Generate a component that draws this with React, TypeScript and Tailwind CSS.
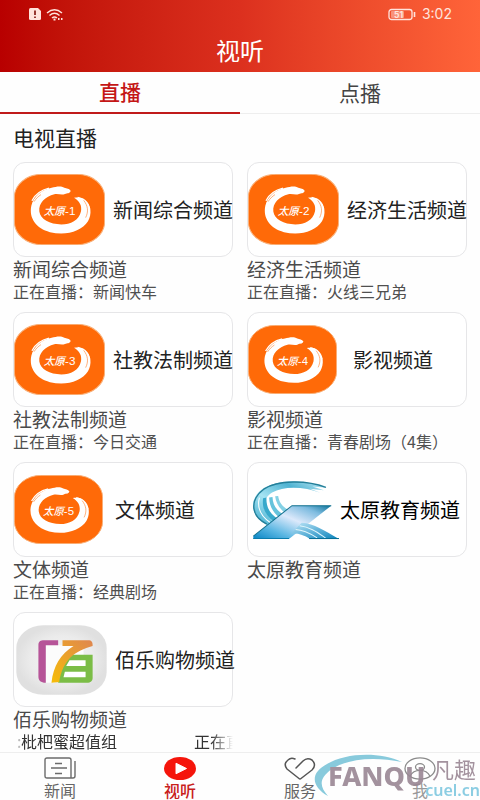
import type { ReactNode } from "react";

type Channel = {
  id: string;
  name: string;
  logo: ReactNode;
  titleClass: string;
  nowPlaying?: string;
  marquee?: [string, string];
};

function TaiyuanLogo({ no, small }: { no: number; small?: boolean }) {
  return (
    <svg viewBox="0 0 273 210" preserveAspectRatio="none" className={small ? "h-[69px] w-[89px] shrink-0" : "h-[71px] w-[91px] shrink-0"} aria-hidden="true">
      <rect x="1" y="1" width="271" height="208" rx="82" ry="68" fill="#ff6a08" stroke="#f9b27c" strokeWidth="3" />
      <path
        d="M170 50 C166 43 158 44 151 41 C140 34 126 38 113 41 C83 46 59 67 52 94 C44 131 67 161 108 172 C154 183 202 171 222 140 C234 119 232 91 214 77 C205 68 192 69 180 70 C197 80 204 93 201 110 C195 137 170 149 142 149 C107 149 79 134 76 111 C73 86 94 67 121 60 C133 57 142 64 153 59 C160 55 166 59 170 50 Z"
        fill="#fff"
      />
      <path d="M54 79 C66 56 84 47 105 42 M58 91 C63 72 78 61 91 55 M191 69 C211 74 222 87 227 103 M200 77 C214 88 219 101 217 116" fill="none" stroke="#fff" strokeWidth="4" />
      <path d="M209 78 C222 94 224 111 215 129 M60 82 C65 74 73 66 81 61" fill="none" stroke="#ff8a3c" strokeWidth="2" />
      <text x="89" y="122" fill="#fff" fontSize="32" fontStyle="italic" fontWeight="500" fontFamily="'Noto Sans CJK SC', sans-serif">
        太原
      </text>
      <text x="153" y="122" fill="#fff" fontSize="35" fontFamily="'Liberation Sans', sans-serif">
        -{no}
      </text>
    </svg>
  );
}

function EducationLogo() {
  return (
    <svg viewBox="42 80 262 178" className="h-[60px] w-[88px] shrink-0" aria-hidden="true">
      <defs>
        <linearGradient id="eduArc" x1="0" y1="1" x2="1" y2="0">
          <stop offset="0" stopColor="#3ba9cc" />
          <stop offset="0.4" stopColor="#a5e4f3" />
          <stop offset="0.7" stopColor="#4fb3d2" />
          <stop offset="1" stopColor="#c5ecf6" />
        </linearGradient>
        <linearGradient id="eduBar" x1="0" y1="1" x2="1" y2="0">
          <stop offset="0" stopColor="#0784c4" />
          <stop offset="0.25" stopColor="#59b6e2" />
          <stop offset="0.55" stopColor="#dce9fb" />
          <stop offset="0.8" stopColor="#7fbce0" />
          <stop offset="1" stopColor="#0b7399" />
        </linearGradient>
        <linearGradient id="eduFoot" x1="0" y1="0" x2="1" y2="1">
          <stop offset="0" stopColor="#bfe6f8" />
          <stop offset="1" stopColor="#0782bb" />
        </linearGradient>
      </defs>
      <path d="M90 215 C38 190 30 140 71 108 C119 74 207 80 265 103 L222 99 L256 110 L214 106 L246 118 C198 99 137 96 102 117 C70 138 70 172 104 203 Z" fill="url(#eduArc)" />
      <path d="M86 211 C35 185 37 137 77 107 C118 79 207 80 262 102" fill="none" stroke="#247f99" strokeWidth="4" />
      <path d="M64 132 C56 163 69 188 97 207" fill="none" stroke="#fff" strokeWidth="3" />
      <path d="M75 134 C71 164 83 186 107 204 L118 195 C95 179 84 162 85 132 Z" fill="#38a9cb" />
      <path d="M93 132 C94 157 104 176 123 191 L134 182 C113 168 104 152 103 130 Z" fill="#65c3dc" />
      <path d="M111 128 C113 147 122 163 140 177 L150 169 C131 157 122 144 120 127 Z" fill="#84d1e5" />
      <path d="M278 156 H161 L46 247 V255 H152 Z" fill="url(#eduBar)" />
      <path d="M278 156 H161 L46 247" fill="none" stroke="#13718f" strokeWidth="3" />
      <path d="M46 254 H152" stroke="#0b7dad" strokeWidth="3" />
      <path d="M190 207 C229 210 254 229 301 255 H215 C195 243 176 237 158 240 Z" fill="url(#eduFoot)" />
      <path d="M184 216 C216 220 237 236 261 252 M172 227 C199 228 219 241 236 252" fill="none" stroke="#e3f7fd" strokeWidth="3" />
      <path d="M212 254 H301" stroke="#066f96" strokeWidth="3" />
    </svg>
  );
}

function ShoppingLogo() {
  return (
    <svg viewBox="48 74 272 210" preserveAspectRatio="none" className="h-[70px] w-[91px] shrink-0" aria-hidden="true">
      <defs>
        <radialGradient id="shopBg">
          <stop offset="0" stopColor="#f6f6f6" />
          <stop offset="0.7" stopColor="#ebebeb" />
          <stop offset="1" stopColor="#e0e0e0" />
        </radialGradient>
        <linearGradient id="shopSeven" x1="0" y1="1" x2="1" y2="0">
          <stop offset="0" stopColor="#f6bd08" />
          <stop offset="1" stopColor="#df8650" />
        </linearGradient>
      </defs>
      <rect x="49" y="75" width="270" height="208" rx="80" ry="68" fill="url(#shopBg)" />
      <path d="M137 135 H250 V180 H190 L165 247 H137 Z" fill="#fcfcfc" />
      <path d="M174 120 V135 H137 V247 C122 247 115 240 115 229 V134 C115 124 121 120 132 120 Z" fill="#b65498" />
      <path d="M215 163 H277 V232 C277 242 271 247 260 247 H174 C179 213 192 184 215 163 Z" fill="#7bbd46" />
      <path d="M208 180 H256 V197 H198 Z M194 214 H256 V231 H190 Z" fill="#fff" />
      <path d="M187 120 H264 C274 120 278 126 277 137 C225 151 188 178 177 245 L154 247 C160 196 181 162 220 137 H187 Z" fill="url(#shopSeven)" />
    </svg>
  );
}

const CHANNELS: Channel[] = [
  { id: "ty1", name: "新闻综合频道", logo: <TaiyuanLogo no={1} />, titleClass: "ml-2 text-[#222]", nowPlaying: "新闻快车" },
  { id: "ty2", name: "经济生活频道", logo: <TaiyuanLogo no={2} />, titleClass: "ml-2 text-[#222]", nowPlaying: "火线三兄弟" },
  { id: "ty3", name: "社教法制频道", logo: <TaiyuanLogo no={3} />, titleClass: "ml-2 text-[#222]", nowPlaying: "今日交通" },
  { id: "ty4", name: "影视频道", logo: <TaiyuanLogo no={4} small />, titleClass: "ml-4 text-[#222]", nowPlaying: "青春剧场（4集）" },
  { id: "ty5", name: "文体频道", logo: <TaiyuanLogo no={5} small />, titleClass: "ml-3 text-[#222]", nowPlaying: "经典剧场" },
  { id: "edu", name: "太原教育频道", logo: <span className="ml-1 flex"><EducationLogo /></span>, titleClass: "text-black" },
  { id: "shop", name: "佰乐购物频道", logo: <span className="ml-0.5 flex"><ShoppingLogo /></span>, titleClass: "ml-2 text-[#222]", marquee: ["枇杷蜜超值组", "正在直播"] },
];

function StatusBar() {
  return (
    <div className="flex h-7 items-center justify-between px-7 text-[#ffe3dc]">
      <div className="flex items-center gap-1">
        <svg viewBox="0 0 14 14" className="size-3.5" aria-hidden="true">
          <path d="M2.500 1H10L13 4V11.500Q13 13 11.500 13H2.500Q1 13 1 11.500V2.500Q1 1 2.500 1Z" fill="currentColor" />
          <path d="M7 3.500V8M7 9.500V11" stroke="#7d0d08" strokeWidth="1.600" />
        </svg>
        <svg viewBox="0 0 18 13" className="h-[13px] w-[18px]" fill="none" stroke="currentColor" strokeWidth="1.400" aria-hidden="true">
          <path d="M1 5Q8.500-1.500 16 5M3.500 7.500Q8.500 3 13.500 7.500M6 10Q8.500 7.800 11 10" />
          <path d="M7.500 11.500H9.500M12 11H13.500M15 11H16.500" strokeWidth="2" />
        </svg>
      </div>
      <div className="flex items-center gap-1.5">
        <svg viewBox="0 0 28 13" className="h-[13px] w-7" aria-hidden="true">
          <rect x="1" y="1.500" width="23" height="10" rx="2.500" fill="none" stroke="currentColor" strokeWidth="1.300" />
          <rect x="3" y="3" width="13" height="7" rx="1" fill="currentColor" opacity="0.45" />
          <path d="M26.500 4V9" stroke="currentColor" strokeWidth="1.600" />
          <text x="6" y="9.500" fill="currentColor" fontSize="8.500" fontWeight="700" fontFamily="Inter, sans-serif">
            51
          </text>
        </svg>
        <span className="font-[Inter,sans-serif] text-sm leading-5">3:02</span>
      </div>
    </div>
  );
}

function ChannelCard({ channel }: { channel: Channel }) {
  return (
    <a href={`#${channel.id}`} className="block min-w-0">
      <div className="flex h-[95px] items-center rounded-xl border border-[#e6e6e8] bg-white">
        {channel.logo}
        <span className={`text-xl whitespace-nowrap ${channel.titleClass}`}>{channel.name}</span>
      </div>
      <h3 className="text-[19px] leading-6 whitespace-nowrap text-[#4a4a4a]">{channel.name}</h3>
      {channel.nowPlaying && (
        <p className="text-base leading-[21px] whitespace-nowrap text-[#505050]">正在直播：{channel.nowPlaying}</p>
      )}
      {channel.marquee && (
        <p className="flex overflow-hidden pl-1 text-base leading-[21px] whitespace-nowrap text-[#333] mask-r-from-90%">
          <span className="w-1 text-[#bbb]">:</span>
          <span>{channel.marquee[0]}</span>
          <span className="ml-[77px]">{channel.marquee[1]}</span>
        </p>
      )}
    </a>
  );
}

function NewsIcon() {
  return (
    <svg viewBox="0 0 32 23" className="h-[23px] w-8" fill="none" stroke="#6b6b6b" strokeWidth="1.400" aria-hidden="true">
      <path d="M3 1H25Q27 1 27 3V21H3Q1 21 1 19V3Q1 1 3 1ZM27 21H29Q31 21 31 19V4" />
      <path d="M11 6.500H18M7 11H23M11 16.500H18" />
    </svg>
  );
}

function PlayIcon() {
  return (
    <svg viewBox="0 0 32 24" preserveAspectRatio="none" className="h-[23px] w-8" aria-hidden="true">
      <ellipse cx="16" cy="12" rx="16" ry="12" fill="#f5150b" />
      <path d="M12 6.500 22.500 12 12 17.500Z" fill="#fff" stroke="#fff" strokeWidth="1" strokeLinejoin="round" />
    </svg>
  );
}

function HeartIcon() {
  return (
    <svg viewBox="0 0 32 23" className="h-[23px] w-8" fill="none" stroke="#555" strokeWidth="1.500" strokeLinecap="round" strokeLinejoin="round" aria-hidden="true">
      <path d="M12 11 19 4Q23 0 28 3Q33 8 28 13L17 21.500Q16 22.500 15 21.500L3 12Q-1 7 4 3Q7 0 11 2" />
    </svg>
  );
}

function UserIcon() {
  return (
    <svg viewBox="0 0 32 24" preserveAspectRatio="none" className="h-[23px] w-8" fill="none" stroke="#8b8b8b" strokeWidth="1.300" aria-hidden="true">
      <ellipse cx="16" cy="12" rx="15" ry="11.200" />
      <ellipse cx="16" cy="10.500" rx="4.500" ry="3.500" />
      <path d="M6 20Q9 14 16 14Q23 14 26 20" />
    </svg>
  );
}

const NAV_ITEMS = [
  { label: "新闻", icon: <NewsIcon /> },
  { label: "视听", icon: <PlayIcon />, active: true },
  { label: "服务", icon: <HeartIcon /> },
  { label: "我", icon: <UserIcon /> },
];

// Site stamp that floats over the bottom right corner of the page
function SiteStamp() {
  return (
    <div className="pointer-events-none absolute right-0 bottom-0 h-12 w-[168px] opacity-90">
      <svg viewBox="0 0 168 48" className="absolute inset-0 h-full w-full" aria-hidden="true">
        <path d="M16 44C-1 34-2 21 15 12C33 1 67-1 90 10C61 4 35 7 20 17C7 26 7 34 16 44Z" fill="#7cc5d9" />
      </svg>
      <span className="absolute bottom-1 left-4 font-['Noto_Sans',sans-serif] text-[27px] leading-10 font-extrabold text-[#9a8794]">FANQU</span>
      <span className="absolute top-1 right-1 text-[22px] leading-6 text-[#9a8794]">凡趣</span>
      <span className="absolute right-0 bottom-0 font-['Noto_Sans',sans-serif] text-base leading-5 font-semibold text-[#7fc8e0]">cuel.cn</span>
    </div>
  );
}

export default function App() {
  return (
    <div className="relative flex min-h-screen flex-col overflow-hidden bg-[#fefefe] font-['Noto_Sans_CJK_SC',sans-serif]">
      <header className="h-[72px] bg-linear-to-r from-[#b80000] via-[#dc301e] to-[#ff6439]">
        <StatusBar />
        <h1 className="text-center text-2xl leading-11 text-white">视听</h1>
      </header>

      <div role="tablist" className="grid h-[42px] grid-cols-2">
        <button type="button" role="tab" aria-selected="true" className="border-b-2 border-[#c01a1a] text-[21px] font-medium text-[#c41616]">
          直播
        </button>
        <button type="button" role="tab" aria-selected="false" className="border-b border-[#eeeeee] text-[21px] text-[#444]">
          点播
        </button>
      </div>

      <main className="flex-1 px-[13px]">
        <h2 className="h-12 text-[21px] leading-[46px] text-[#222]">电视直播</h2>
        <div className="grid grid-cols-2 gap-x-3.5 gap-y-2.5">
          {CHANNELS.map((c) => (
            <ChannelCard key={c.id} channel={c} />
          ))}
        </div>
      </main>

      <nav className="grid h-12 grid-cols-4 border-t border-[#eeeeee]">
        {NAV_ITEMS.map((item) => (
          <a
            key={item.label}
            href="#"
            className={`flex flex-col items-center pt-1 text-base leading-5 ${item.active ? "font-medium text-[#c8201a]" : item.label === "我" ? "text-[#999]" : "text-[#666]"}`}
          >
            {item.icon}
            <span>{item.label}</span>
          </a>
        ))}
      </nav>
      <SiteStamp />
    </div>
  );
}
